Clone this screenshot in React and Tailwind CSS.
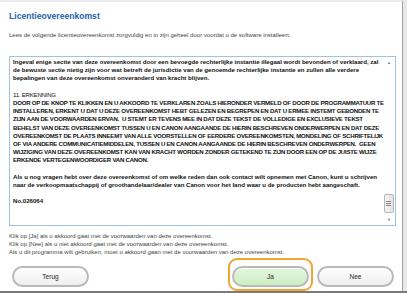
import React from "react";

const lines = [
  { t: "Ingeval enige sectie van deze overeenkomst door een bevoegde rechterlijke instantie illegaal wordt bevonden of verklaard, zal" },
  { t: "de bewuste sectie nietig zijn voor wat betreft de jurisdictie van de genoemde rechterlijke instantie en zullen alle verdere" },
  { t: "bepalingen van deze overeenkomst onveranderd van kracht blijven." },
  { t: "" },
  { t: "11. ERKENNING", caps: true, thin: true },
  { t: "DOOR OP DE KNOP TE KLIKKEN EN U AKKOORD TE VERKLAREN ZOALS HIERONDER VERMELD OF DOOR DE PROGRAMMATUUR TE", caps: true },
  { t: "INSTALLEREN, ERKENT U DAT U DEZE OVEREENKOMST HEBT GELEZEN EN BEGREPEN EN DAT U ERMEE INSTEMT GEBONDEN TE", caps: true },
  { t: "ZIJN AAN DE VOORWAARDEN ERVAN.  U STEMT ER TEVENS MEE IN DAT DEZE TEKST DE VOLLEDIGE EN EXCLUSIEVE TEKST", caps: true },
  { t: "BEHELST VAN DEZE OVEREENKOMST TUSSEN U EN CANON AANGAANDE DE HIERIN BESCHREVEN ONDERWERPEN EN DAT DEZE", caps: true },
  { t: "OVEREENKOMST DE PLAATS INNEEMT VAN ALLE VOORSTELLEN OF EERDERE OVEREENKOMSTEN, MONDELING OF SCHRIFTELIJK", caps: true },
  { t: "OF VIA ANDERE COMMUNICATIEMIDDELEN, TUSSEN U EN CANON AANGAANDE DE HIERIN BESCHREVEN ONDERWERPEN.  GEEN", caps: true },
  { t: "WIJZIGING VAN DEZE OVEREENKOMST KAN VAN KRACHT WORDEN ZONDER GETEKEND TE ZIJN DOOR EEN OP DE JUISTE WIJZE", caps: true },
  { t: "ERKENDE VERTEGENWOORDIGER VAN CANON.", caps: true },
  { t: "" },
  { t: "Als u nog vragen hebt over deze overeenkomst of om welke reden dan ook contact wilt opnemen met Canon, kunt u schrijven" },
  { t: "naar de verkoopmaatschappij of groothandelaar/dealer van Canon voor het land waar u de producten hebt aangeschaft." },
  { t: "" },
  { t: "No.026064" },
];

function Pill({ children, active }) {
  return (
    <button
      className={
        "h-[21px] w-[77px] rounded-full border-2 border-[#b9b9b9] text-[6.5px] text-[#222] shadow-[inset_0_1px_0_#fff] " +
        (active ? "bg-gradient-to-b from-[#e3f6dd] to-[#cdeec3]" : "bg-gradient-to-b from-[#ffffff] to-[#eeeeee]")
      }
    >
      {children}
    </button>
  );
}

export default function App() {
  return (
    <div
      className="w-[407px] h-[293px] bg-[#e9e9e9] flex flex-col overflow-hidden"
      style={{ fontFamily: '"Liberation Sans", Arial, sans-serif' }}
    >
      <div className="flex flex-1">
        <div className="w-[403px] bg-white border-r border-[#a0a0a0] border-t-[2px] border-t-[#ececec] flex flex-col px-[9px]">
          <h1 className="mt-[9px] text-[8.6px] font-bold text-[#1d5fae] leading-[10px]">
            Licentieovereenkomst
          </h1>
          <p className="mt-[10px] text-[6px] text-[#444] leading-[8px]">
            Lees de volgende licentieovereenkomst zorgvuldig en in zijn geheel door voordat u de software installeert.
          </p>

          {/* TEXT BOX */}
          <div className="mt-[17px] h-[170px] w-[387px] border border-[#9fc3e0] flex">
            <div className="flex-1 pl-[3px] pt-[1px] text-[6.1px] font-bold text-[#111] leading-[8.2px] whitespace-pre">
              {lines.map((l, i) => (
                <div
                  key={i}
                  className={
                    "h-[8.2px] " +
                    (l.caps ? "tracking-[-0.24px] " : "") +
                    (l.thin ? "font-normal" : "")
                  }
                >
                  {l.t}
                </div>
              ))}
            </div>
            {/* SCROLLBAR */}
            <div className="w-[11px] my-[1px] mr-[1px] flex flex-col items-center">
              <div className="h-[9px] text-[4px] text-[#777] leading-[9px]">▲</div>
              <div className="flex-1 w-full flex flex-col justify-end pb-[2px]">
                <div className="h-[19px] w-full rounded-[2px] border border-[#b8b8b8] bg-gradient-to-r from-[#f4f4f4] to-[#e2e2e2] flex flex-col items-center justify-center gap-[1px]">
                  <div className="w-[5px] h-px bg-[#888]" />
                  <div className="w-[5px] h-px bg-[#888]" />
                  <div className="w-[5px] h-px bg-[#888]" />
                </div>
              </div>
              <div className="h-[9px] text-[4px] text-[#777] leading-[9px]">▼</div>
            </div>
          </div>

          <div className="mt-[6px] text-[6px] text-[#444] leading-[8px]">
            <p>Klik op [Ja] als u akkoord gaat met de voorwaarden van deze overeenkomst.</p>
            <p>Klik op [Nee] als u niet akkoord gaat met de voorwaarden van deze overeenkomst.</p>
            <p>Als u dit programma wilt gebruiken, moet u akkoord gaan met de voorwaarden van deze overeenkomst.</p>
          </div>

          {/* BUTTONS */}
          <div className="mt-[2px] flex items-center">
            <div className="ml-[3px]">
              <Pill>Terug</Pill>
            </div>
            <div className="ml-auto rounded-[9px] border-2 border-[#f0a531] p-[2px]">
              <Pill active>Ja</Pill>
            </div>
            <div className="ml-[4px] mr-[-1px]">
              <Pill>Nee</Pill>
            </div>
          </div>
        </div>
      </div>
      <div className="h-[4px] bg-[#7b7b7b]" />
    </div>
  );
}
